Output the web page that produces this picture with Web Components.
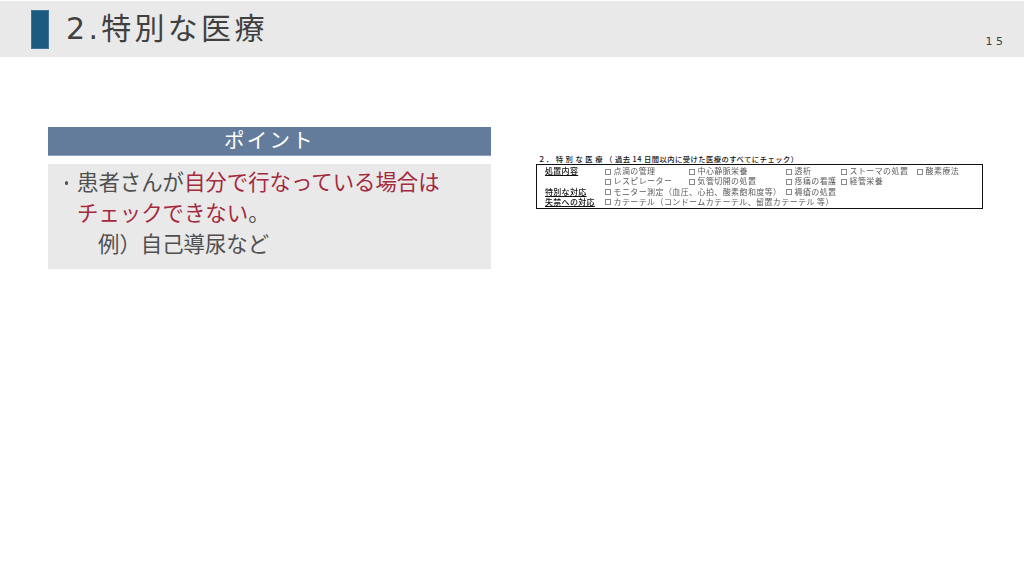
<!DOCTYPE html>
<html lang="ja"><head><meta charset="utf-8">
<style>
html,body{margin:0;padding:0;background:#fff;}
body{width:1024px;height:576px;overflow:hidden;font-family:"DejaVu Sans","Noto Sans CJK JP",sans-serif;}
point-line em{font-style:normal;color:#a42a3e}
</style></head><body>
<slide-page>
  <slide-header slot="header" page="1 5">2.特別な医療</slide-header>
  <point-panel slot="left" heading="ポイント">
    <point-line bullet><span>患者さんが<em>自分で行なっている場合は</em></span></point-line>
    <point-line><em>チェックできない</em>。</point-line>
    <point-line indent>例）自己導尿など</point-line>
  </point-panel>
  <care-form slot="right"></care-form>
</slide-page>
<script>
function def(name, html, init){
  customElements.define(name, class extends HTMLElement{
    constructor(){super();this.attachShadow({mode:'open'}).innerHTML=html;}
    connectedCallback(){ if(init) init(this); }
  });
}
def('slide-page',`<style>
:host{display:block;width:1024px;height:576px;background:#fff;}
.main{display:flex;padding:70px 41px 0 48px;gap:45px;align-items:flex-start;}
.l{width:443px;flex:none}.r{flex:1;padding-top:27px;min-width:0}
</style><slot name="header"></slot><div class="main"><div class="l"><slot name="left"></slot></div><div class="r"><slot name="right"></slot></div></div>`);

def('slide-header',`<style>
:host{display:flex;align-items:center;height:56px;margin-top:1px;background:#e9e9e9;color:#404040;position:relative;}
.mark{width:18px;height:39px;margin:0 17px 0 31px;background:#1c5a80;box-shadow:inset 0 0 0 1px #3c7397;}
.t{font:30px/1 "DejaVu Sans","Noto Sans CJK JP",sans-serif;letter-spacing:3.3px;font-weight:400}
.p{position:absolute;right:21px;top:35px;font:11px/1 "DejaVu Sans",sans-serif;color:#404040;}
</style><div class="mark"></div><div class="t"><slot></slot></div><div class="p"></div>`,
el=>{el.shadowRoot.querySelector('.p').textContent=el.getAttribute('page')});

def('point-panel',`<style>
:host{display:block;}
.h{height:28px;background:#637c9c;border-bottom:1px solid #8fa3bc;color:#fff;text-align:center;font:400 20.5px/25.5px "Noto Sans CJK JP",sans-serif;letter-spacing:2.3px}
.b{margin-top:8px;height:105px;box-sizing:border-box;padding-top:1px;background:#e9e9e9;color:#505050;}
</style><div class="h"></div><div class="b"><slot></slot></div>`,
el=>{el.shadowRoot.querySelector('.h').textContent=el.getAttribute('heading')});

def('point-line',`<style>
:host{display:block;position:relative;padding-left:29px;font:400 21.4px/31px "Noto Sans CJK JP",sans-serif;white-space:nowrap;}
:host([indent]){padding-left:50px}
.d{position:absolute;left:16.5px;top:16px;width:3.6px;height:3.6px;border-radius:50%;background:#505050;display:none}
:host([bullet]) .d{display:block}
</style><span class="d"></span><slot></slot>`);

def('care-form',`<style>
:host{display:block;color:#222;}
.cap{font:500 7.3px/10px "Noto Sans CJK JP",sans-serif;padding-left:2px;color:#111;height:10px;white-space:pre;letter-spacing:.47px;}
.box{border:1.5px solid #111;height:45px;box-sizing:border-box;padding-top:1px;display:grid;
 grid-template-columns:68px 84px 97px 55px 76px 1fr;grid-auto-rows:10.3px;font:8px/10.3px "Noto Sans CJK JP",sans-serif;letter-spacing:.4px;color:#5a5a5a;white-space:nowrap;filter:blur(.25px)}
b{font-weight:500;color:#111;text-decoration:underline;padding-left:8px;font-size:8px;letter-spacing:.3px}
i{font-style:normal;display:inline-block;width:6px;height:6px;border:.6px solid #8a8a8a;box-sizing:border-box;margin:0 2.5px 0 0;vertical-align:-.5px}
.a{grid-column:span 2}.c{grid-column:span 3}.d{grid-column:span 5}
</style>
<div class="cap">２． 特 別 な 医 療 （ 過去 14 日間以内に受けた医療のすべてにチェック）</div>
<div class="box">
<b>処置内容</b><span><i></i>点滴の管理</span><span><i></i>中心静脈栄養</span><span><i></i>透析</span><span><i></i>ストーマの処置</span><span><i></i>酸素療法</span>
<b></b><span><i></i>レスピレーター</span><span><i></i>気管切開の処置</span><span><i></i>疼痛の看護</span><span class="a"><i></i>経管栄養</span>
<b>特別な対応</b><span class="a"><i></i>モニター測定（血圧、心拍、酸素飽和度等）</span><span class="c"><i></i>褥瘡の処置</span>
<b>失禁への対応</b><span class="d"><i></i>カテーテル（コンドームカテーテル、留置カテーテル 等）</span>
</div>`);
</script>
</body></html>
